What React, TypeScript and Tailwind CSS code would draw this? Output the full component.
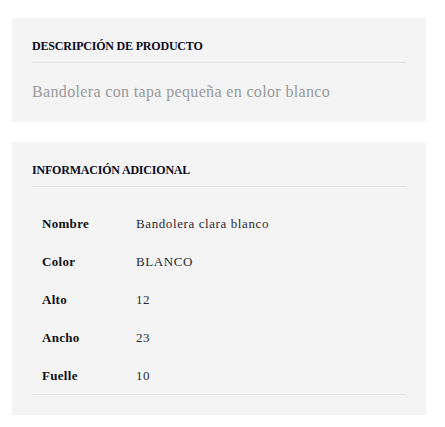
const rows = [
  { label: 'Nombre', value: 'Bandolera clara blanco' },
  { label: 'Color', value: 'BLANCO' },
  { label: 'Alto', value: '12' },
  { label: 'Ancho', value: '23' },
  { label: 'Fuelle', value: '10' },
]

function Heading({ children }: { children: React.ReactNode }) {
  return (
    <h3 className="border-b border-[#e2e2e2] pb-[8px] text-[12px] leading-[16px] font-bold uppercase tracking-[-0.2px] text-[#0b0b1e]">
      {children}
    </h3>
  )
}

export default function App() {
  return (
    <div
      className="min-h-[427px] bg-white pt-[18px]"
      style={{ fontFamily: '"Liberation Serif", "DejaVu Serif", serif' }}
    >
      <section className="ml-[12px] w-[414px] bg-[#f4f4f4] px-[20px] pt-[20px] pb-[18px]">
        <Heading>Descripción de producto</Heading>
        <p className="mt-[17px] text-[16px] leading-[24px] tracking-[0.35px] text-[#999]">
          Bandolera con tapa pequeña en color blanco
        </p>
      </section>

      <section className="mt-[20px] ml-[12px] w-[414px] bg-[#f4f4f4] px-[20px] py-[20px]">
        <Heading>Información adicional</Heading>
        <div className="mt-[17px] border-b border-[#e6e6e6]">
          {rows.map((row) => (
            <div key={row.label} className="grid h-[38px] grid-cols-[94px_1fr] items-center pt-[2px]">
              <span className="pl-[10px] text-[13px] font-bold tracking-[0.3px] text-[#111]">{row.label}</span>
              <span className="pl-[10px] text-[13px] tracking-[0.6px] text-[#2a2a33]">{row.value}</span>
            </div>
          ))}
        </div>
      </section>
    </div>
  )
}
